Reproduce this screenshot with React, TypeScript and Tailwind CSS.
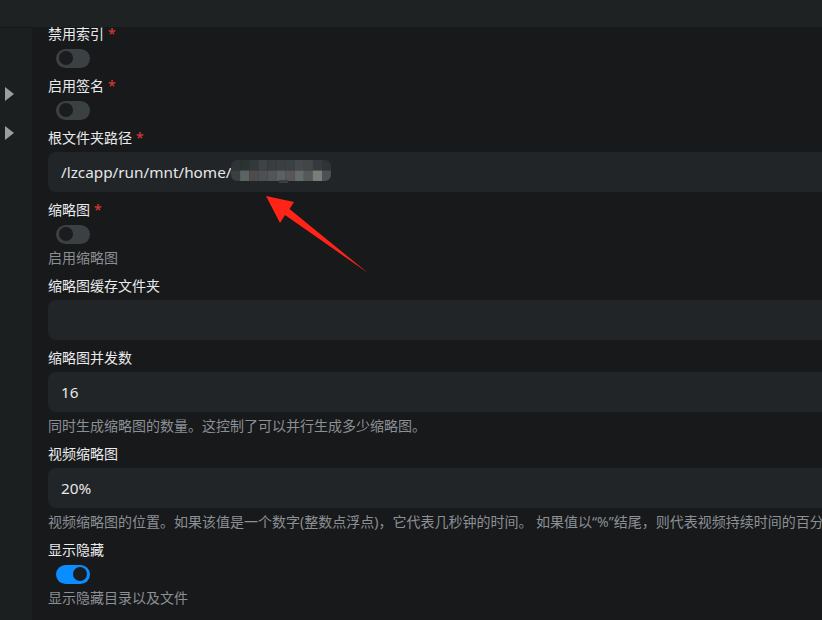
import React from 'react';

type Field =
  | { kind: 'toggle'; label: string; required?: boolean; on?: boolean; hint?: string }
  | { kind: 'input'; label: string; required?: boolean; value?: string; masked?: boolean; hint?: string };

const fields: Field[] = [
  { kind: 'toggle', label: '禁用索引', required: true },
  { kind: 'toggle', label: '启用签名', required: true },
  { kind: 'input', label: '根文件夹路径', required: true, value: '/lzcapp/run/mnt/home/', masked: true },
  { kind: 'toggle', label: '缩略图', required: true, hint: '启用缩略图' },
  { kind: 'input', label: '缩略图缓存文件夹', value: '' },
  { kind: 'input', label: '缩略图并发数', value: '16', hint: '同时生成缩略图的数量。这控制了可以并行生成多少缩略图。' },
  {
    kind: 'input',
    label: '视频缩略图',
    value: '20%',
    hint: '视频缩略图的位置。如果该值是一个数字(整数点浮点)，它代表几秒钟的时间。 如果值以“%”结尾，则代表视频持续时间的百分比。',
  },
  { kind: 'toggle', label: '显示隐藏', on: true, hint: '显示隐藏目录以及文件' },
];

const mosaic = [
  ['#2e3436', '#2b3331', '#33383a', '#3d4346', '#3a3d40', '#3c3f42', '#3b4143', '#45494b', '#424646', '#353a3c', '#2f3335'],
  ['#3a3f41', '#5a6462', '#504a4a', '#4d5155', '#535558', '#5c6063', '#5a5556', '#646969', '#55595a', '#7a7d78', '#4b5052'],
];

function Mosaic() {
  return (
    <svg width="100" height="24" viewBox="0 0 100 24" className="block">
      <defs>
        <clipPath id="pill">
          <rect x="0" y="0" width="100" height="21" rx="6" />
          <rect x="48" y="20" width="9" height="3" />
        </clipPath>
      </defs>
      <g clipPath="url(#pill)">
        {mosaic.map((row, r) =>
          row.map((c, i) => <rect key={`${r}-${i}`} x={i * 9.1} y={r * 10.5} width="9.2" height="10.6" fill={c} />)
        )}
        <rect x="48" y="20" width="9" height="3" fill="#3a3e41" />
      </g>
    </svg>
  );
}

function Toggle({ on }: { on?: boolean }) {
  return (
    <div className="h-5 flex items-center pl-2">
      <div
        className={
          on
            ? 'w-[34px] h-[19px] rounded-full bg-[#0a8dff] flex items-center justify-end pr-[3px]'
            : 'w-[34px] h-[19px] rounded-full bg-[#3b4042] flex items-center pl-[3px]'
        }
      >
        <div className="w-[14px] h-[14px] rounded-full bg-[#1a1c1e]" />
      </div>
    </div>
  );
}

function Label({ text, required }: { text: string; required?: boolean }) {
  return (
    <div className="h-5 leading-5 text-[14px] text-[#eaebec]">
      {text}
      {required && <span className="text-[#e03b35] ml-1">*</span>}
    </div>
  );
}

function Arrow() {
  return (
    <svg className="absolute left-0 top-0 pointer-events-none" width="822" height="620">
      <polygon points="266,196 294,202 289.5,209 368,273 285,215 280,223" fill="#ff2417" />
    </svg>
  );
}

export default function App() {
  return (
    <div
      className="relative w-[822px] h-[620px] overflow-hidden bg-[#18191b] flex flex-col"
      style={{ fontFamily: '"Noto Sans", "Noto Sans CJK SC", sans-serif' }}
    >
      <div className="h-7 shrink-0 bg-[#1f2223] border-b border-[#16181a]" />
      <div className="flex flex-1 min-h-0">
        <aside className="w-[33px] shrink-0 bg-[#1c1f20] border-r border-[#17191a] flex flex-col items-start pl-[5px] pt-[59px] gap-[25px]">
          <span className="block w-0 h-0 border-y-[7px] border-y-transparent border-l-[9px] border-l-[#9a9ea2]" />
          <span className="block w-0 h-0 border-y-[7px] border-y-transparent border-l-[9px] border-l-[#9a9ea2]" />
        </aside>
        <main className="flex-1 min-w-0 pl-[15px] -mt-[4px] flex flex-col gap-2">
          {fields.map((f) => (
            <div key={f.label} className="flex flex-col gap-1">
              <Label text={f.label} required={f.required} />
              {f.kind === 'toggle' ? (
                <Toggle on={f.on} />
              ) : (
                <div className="h-10 w-[820px] rounded-lg bg-[#212527] flex items-center pl-[13px] text-[15.3px] text-[#e6e7e8] whitespace-nowrap">
                  {f.value}
                  {f.masked && <Mosaic />}
                </div>
              )}
              {f.hint && (
                <div className="h-5 leading-5 text-[14px] text-[#8b9095] whitespace-nowrap">{f.hint}</div>
              )}
            </div>
          ))}
        </main>
      </div>
      <Arrow />
    </div>
  );
}
